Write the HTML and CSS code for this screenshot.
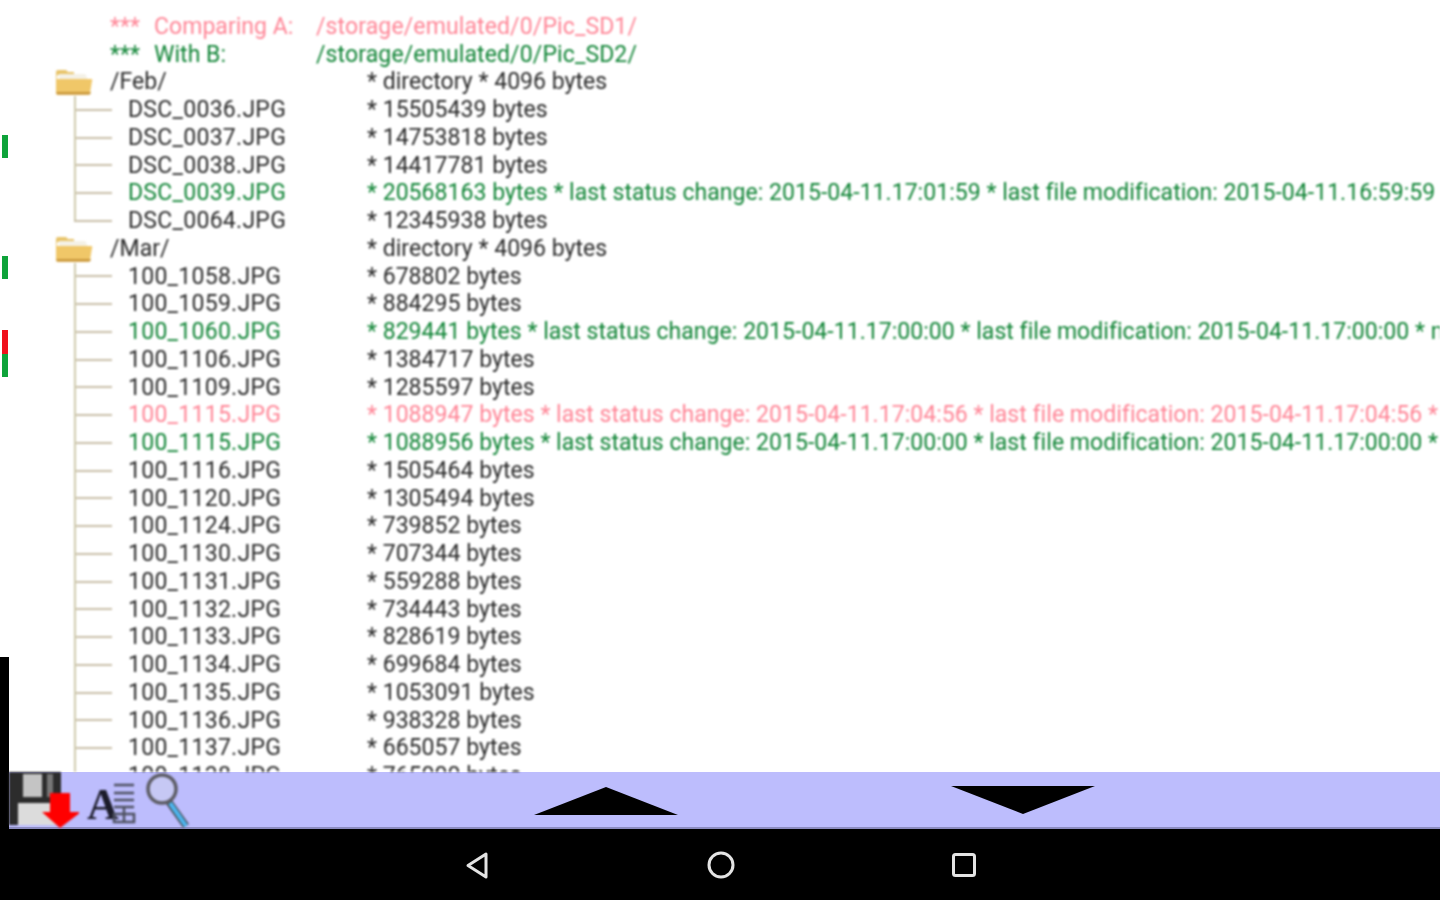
FILE: index.html
```html
<!DOCTYPE html>
<html lang="en">
<head>
<meta charset="utf-8">
<title>Directory compare</title>
<link rel="stylesheet" href="styles.css">
</head>
<body>
<div class="screen">
  <main class="listing">
    <div class="row a"><span class="gutter"></span><span class="stars">***</span><span class="label">Comparing A:</span><span class="path">/storage/emulated/0/Pic_SD1/</span></div>
    <div class="row b"><span class="gutter"></span><span class="stars">***</span><span class="label">With B:</span><span class="path">/storage/emulated/0/Pic_SD2/</span></div>

    <div class="row"><span class="gutter folder"><svg class="folder-icon" viewBox="0 0 38 26"><path d="M1 25V3q0-2 2-2h8l2 2h6v3H2z" fill="#e8c46a"/><path d="M4 5h26l2 3v4H4z" fill="#f4f1e6"/><path d="M1 10h35q2 0 1 2l-2 12q0 2-2 2H3q-2 0-2-2z" fill="#f0c768"/><path d="M1 23h35l-1 2.500H2z" fill="#c9983f"/></svg></span><span class="folder-name">/Feb/</span><span>* directory * 4096 bytes</span></div>
    <div class="row"><span class="branch"></span><span class="name">DSC_0036.JPG</span><span>* 15505439 bytes</span></div>
    <div class="row"><span class="branch"></span><span class="name">DSC_0037.JPG</span><span>* 14753818 bytes</span></div>
    <div class="row"><span class="branch"></span><span class="name">DSC_0038.JPG</span><span>* 14417781 bytes</span></div>
    <div class="row b"><span class="branch"></span><span class="name">DSC_0039.JPG</span><span>* 20568163 bytes * last status change: 2015-04-11.17:01:59 * last file modification: 2015-04-11.16:59:59 *</span></div>
    <div class="row"><span class="branch last"></span><span class="name">DSC_0064.JPG</span><span>* 12345938 bytes</span></div>

    <div class="row"><span class="gutter folder"><svg class="folder-icon" viewBox="0 0 38 26"><path d="M1 25V3q0-2 2-2h8l2 2h6v3H2z" fill="#e8c46a"/><path d="M4 5h26l2 3v4H4z" fill="#f4f1e6"/><path d="M1 10h35q2 0 1 2l-2 12q0 2-2 2H3q-2 0-2-2z" fill="#f0c768"/><path d="M1 23h35l-1 2.500H2z" fill="#c9983f"/></svg></span><span class="folder-name">/Mar/</span><span>* directory * 4096 bytes</span></div>
    <div class="row"><span class="branch"></span><span class="name">100_1058.JPG</span><span>* 678802 bytes</span></div>
    <div class="row"><span class="branch"></span><span class="name">100_1059.JPG</span><span>* 884295 bytes</span></div>
    <div class="row b"><span class="branch"></span><span class="name">100_1060.JPG</span><span>* 829441 bytes * last status change: 2015-04-11.17:00:00 * last file modification: 2015-04-11.17:00:00 * m</span></div>
    <div class="row"><span class="branch"></span><span class="name">100_1106.JPG</span><span>* 1384717 bytes</span></div>
    <div class="row"><span class="branch"></span><span class="name">100_1109.JPG</span><span>* 1285597 bytes</span></div>
    <div class="row a"><span class="branch"></span><span class="name">100_1115.JPG</span><span>* 1088947 bytes * last status change: 2015-04-11.17:04:56 * last file modification: 2015-04-11.17:04:56 *</span></div>
    <div class="row b"><span class="branch"></span><span class="name">100_1115.JPG</span><span>* 1088956 bytes * last status change: 2015-04-11.17:00:00 * last file modification: 2015-04-11.17:00:00 *</span></div>
    <div class="row"><span class="branch"></span><span class="name">100_1116.JPG</span><span>* 1505464 bytes</span></div>
    <div class="row"><span class="branch"></span><span class="name">100_1120.JPG</span><span>* 1305494 bytes</span></div>
    <div class="row"><span class="branch"></span><span class="name">100_1124.JPG</span><span>* 739852 bytes</span></div>
    <div class="row"><span class="branch"></span><span class="name">100_1130.JPG</span><span>* 707344 bytes</span></div>
    <div class="row"><span class="branch"></span><span class="name">100_1131.JPG</span><span>* 559288 bytes</span></div>
    <div class="row"><span class="branch"></span><span class="name">100_1132.JPG</span><span>* 734443 bytes</span></div>
    <div class="row"><span class="branch"></span><span class="name">100_1133.JPG</span><span>* 828619 bytes</span></div>
    <div class="row"><span class="branch"></span><span class="name">100_1134.JPG</span><span>* 699684 bytes</span></div>
    <div class="row"><span class="branch"></span><span class="name">100_1135.JPG</span><span>* 1053091 bytes</span></div>
    <div class="row"><span class="branch"></span><span class="name">100_1136.JPG</span><span>* 938328 bytes</span></div>
    <div class="row"><span class="branch"></span><span class="name">100_1137.JPG</span><span>* 665057 bytes</span></div>
    <div class="row"><span class="branch"></span><span class="name">100_1138.JPG</span><span>* 765000 bytes</span></div>
  </main>

  <div class="marker green m1"></div>
  <div class="marker green m2"></div>
  <div class="marker red m3"></div>
  <div class="marker green m4"></div>
  <div class="rail"></div>

  <div class="toolbar">
    <svg class="ico-save" viewBox="0 0 70 56">
      <path d="M0 0h52v53H0z" fill="#2c2c2c"/>
      <path d="M14 2h19v23H14z" fill="#c4c4c4"/>
      <path d="M38 2h6v23h-6z" fill="#777"/>
      <path d="M9 31h42v22H9z" fill="#dcdcdc"/>
      <path d="M41 21h20v19h11L51 56 33 40h8z" fill="#ff0000"/>
    </svg>
    <svg class="ico-font" viewBox="0 0 50 46">
      <text x="0" y="39" class="ico-letter">A</text>
      <path d="M27 5h20M27 13h20M27 20h20M27 27h20M27 34h20v8H27zM37 27v15" fill="none" stroke="#4d5060" stroke-width="2.500"/>
    </svg>
    <svg class="ico-search" viewBox="0 0 44 56">
      <path d="M24 30l17 24" stroke="#444" stroke-width="7"/>
      <path d="M25 31l16 23" stroke="#4db4ee" stroke-width="4.500"/>
      <circle cx="17" cy="17" r="14" fill="#c6c8f4" stroke="#5c5c64" stroke-width="3.500"/>
    </svg>
    <svg class="arrow up" viewBox="0 0 144 30"><path d="M72 1l72 28H0z"/></svg>
    <svg class="arrow down" viewBox="0 0 144 30"><path d="M0 1h144L72 29z"/></svg>
  </div>

  <nav class="navbar">
    <svg class="nav-ico" viewBox="0 0 30 30"><path d="M23 4v23L5 15.500z" fill="none" stroke="#e4e4e4" stroke-width="3" stroke-linejoin="round"/></svg>
    <svg class="nav-ico" viewBox="0 0 30 30"><circle cx="15" cy="15" r="12" fill="none" stroke="#e4e4e4" stroke-width="3"/></svg>
    <svg class="nav-ico" viewBox="0 0 30 30"><rect x="4.500" y="4.500" width="21" height="21" rx="2" fill="none" stroke="#e4e4e4" stroke-width="3"/></svg>
  </nav>
</div>
</body>
</html>
```

FILE: styles.css
```css
* { box-sizing: border-box; }

html, body {
  margin: 0;
  height: 100%;
  overflow: hidden;
  background: #fff;
}

.screen {
  position: relative;
  width: 1440px;
  height: 900px;
  display: flex;
  flex-direction: column;
  font-family: Roboto, "Liberation Sans", sans-serif;
}

.listing {
  height: 772px;
  padding-top: 12.750px;
  overflow: hidden;
  font-size: 23px;
  letter-spacing: 0.04px;
  color: #2a2a2a;
  filter: blur(1px);
}

.row {
  display: flex;
  align-items: center;
  height: 27.750px;
  line-height: 27.750px;
  white-space: nowrap;
}

.row.a { color: #ff8596; }
.row.b { color: #0f8435; }

.gutter { width: 110px; flex: none; }
.folder { display: flex; padding-left: 55px; }
.folder-icon { width: 38px; height: 26px; display: block; }

.stars { width: 44px; flex: none; }
.label { width: 162px; flex: none; }
.path { letter-spacing: 0.12px; }
.folder-name { width: 257px; flex: none; }

.branch {
  width: 54px;
  height: 100%;
  flex: none;
  margin-left: 74px;
  border-left: 2px solid #cfcbae;
  background: linear-gradient(#c9bfa8, #c9bfa8) no-repeat 0 50% / 36px 2px;
}

.branch.last {
  border-left: 0;
  background:
    linear-gradient(#c9bfa8, #c9bfa8) no-repeat 0 50% / 38px 2px,
    linear-gradient(#cfcbae, #cfcbae) no-repeat 0 0 / 2px 50%;
}

.name { width: 239px; flex: none; letter-spacing: 0.28px; }

.marker { position: absolute; left: 2px; width: 6px; }
.green { background: #0ea33a; }
.red { background: #f0101c; }
.m1 { top: 135px; height: 23px; }
.m2 { top: 256px; height: 23px; }
.m3 { top: 330px; height: 24px; }
.m4 { top: 354px; height: 23px; }

.rail {
  position: absolute;
  left: 0;
  top: 657px;
  width: 9px;
  height: 173px;
  background: #000;
}

.toolbar {
  height: 57px;
  padding-left: 9px;
  display: flex;
  align-items: flex-start;
  background: #bdbdfd;
  border-bottom: 2px solid #8c8cc0;
}

.toolbar svg:not(.arrow) { filter: blur(0.8px); }

.ico-save { width: 70px; height: 56px; flex: none; }
.ico-font { width: 50px; height: 46px; flex: none; margin: 8px 0 0 8px; }
.ico-letter { font: bold 44px "Liberation Serif", serif; fill: #1c1c2a; }
.ico-search { width: 44px; height: 56px; flex: none; margin-left: 8px; }

.arrow { width: 144px; height: 30px; flex: none; fill: #000; }
.arrow.up { margin: 14px 0 0 345px; }
.arrow.down { margin: 13px 0 0 273px; }

.navbar {
  flex: 1;
  display: flex;
  justify-content: center;
  align-items: center;
  gap: 213px;
  padding: 0 0 0 2px;
  background: #000;
}

.nav-ico { width: 30px; height: 30px; flex: none; }
```
